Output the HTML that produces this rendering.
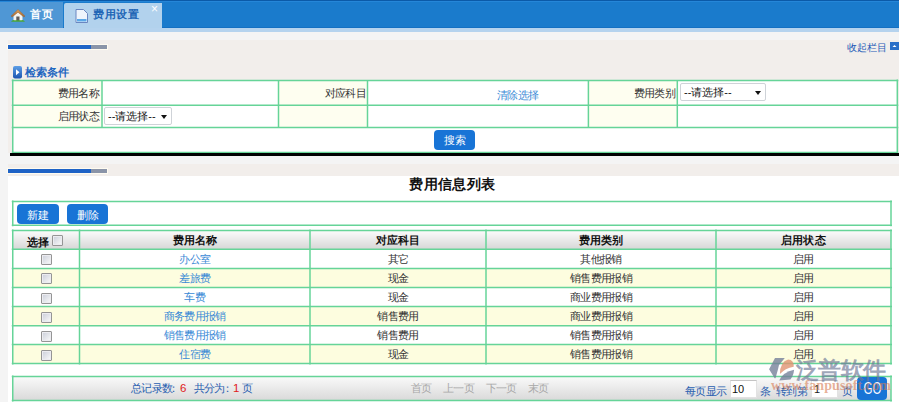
<!DOCTYPE html>
<html><head><meta charset="utf-8">
<style>
*{margin:0;padding:0;box-sizing:border-box}
html,body{width:899px;height:402px;overflow:hidden}
body{position:relative;background:#f4f4f4;font-family:"Liberation Sans",sans-serif;font-size:10px;color:#333}
.a{position:absolute}
.t{white-space:nowrap;line-height:12px;font-size:10.5px;letter-spacing:-0.7px}
.bar{width:99px;background:linear-gradient(90deg,#1f63c6 0,#1f63c6 84%,#8a94a8 84%,#8a94a8 100%);box-shadow:0 0 0 1px #fffbf0}
.sel{height:18px;border:1px solid #cfd3d8;border-radius:2px;background:#fff;font-size:11px;line-height:16px;padding-left:3px;color:#111;white-space:nowrap}
.sel:after{content:"";position:absolute;right:4px;top:7px;border-left:3px solid transparent;border-right:3px solid transparent;border-top:4px solid #111}
.btn{background:#1874d6;color:#fff;border-radius:4px;text-align:center;font-size:11px}
.lk{color:#3a8ad6}
.cb{width:11px;height:11px;border:1px solid #959595;border-radius:1px;box-shadow:inset 0 0 0 1px #ececf0;background:linear-gradient(135deg,#c9cdd8,#fbfbfb)}
</style></head><body>
<div class="a" style="left:0px;top:0px;width:899px;height:28px;background:#1a7bcc"></div>
<div class="a" style="left:0px;top:0px;width:899px;height:1px;background:#0b5aa8"></div>
<div class="a" style="left:0px;top:1px;width:899px;height:1px;background:#2586d8"></div>
<div class="a" style="left:0px;top:27px;width:899px;height:1px;background:#1470c2"></div>
<div class="a" style="left:0px;top:2px;width:63px;height:26px;background:#4f97d5"></div>
<div class="a" style="left:64px;top:3px;width:98px;height:29px;background:#b2d2ed;border-top-left-radius:2px"></div>
<div class="a" style="left:0px;top:28px;width:899px;height:4px;background:#b5d3ee"></div>
<svg class="a" style="left:10px;top:8px" width="16" height="15" viewBox="0 0 16 15">
<defs><linearGradient id="rf" x1="0" y1="0" x2="0" y2="1"><stop offset="0" stop-color="#e2a45c"/><stop offset="1" stop-color="#a8662a"/></linearGradient></defs>
<path d="M3.5 7.5 L8 3.8 L12.5 7.5 L12.5 13 L3.5 13 Z" fill="#f4f4f0"/>
<path d="M1 8.2 L8 1.5 L15 8.2 L13.6 8.8 L8 4.2 L2.4 8.8 Z" fill="url(#rf)" stroke="#9a6030" stroke-width="0.5"/>
<rect x="6.3" y="8.5" width="3.2" height="4.5" fill="#5f5a58"/>
<path d="M1 13.8 Q2.5 11.5 4.5 12.2 L11.5 12.2 Q13.5 11.5 15 13.8 Z" fill="#4aa63a"/>
</svg>
<div class="a t" style="left:30px;top:7px;font-size:11px;font-weight:bold;color:#fff;letter-spacing:0.5px;line-height:14px">首页</div>
<svg class="a" style="left:75px;top:9px" width="13" height="14" viewBox="0 0 13 14">
<path d="M1 0.5 L8.5 0.5 L12.5 4.5 L12.5 13.5 L1 13.5 Z" fill="#eef4fc" stroke="#6a86c0" stroke-width="1"/>
<rect x="2" y="10" width="9.5" height="2.5" fill="#5aa8e8"/>
</svg>
<div class="a t" style="left:93px;top:7px;font-size:11px;font-weight:bold;color:#2266b6;letter-spacing:0.7px;line-height:14px">费用设置</div>
<div class="a t" style="left:151px;top:3px;color:#fff;font-size:12px;line-height:12px">×</div>
<div class="a" style="left:8px;top:40px;width:891px;height:113px;background:#f2eeeb"></div>
<div class="a bar" style="left:8px;top:45px;height:3.5px"></div>
<div class="a t" style="left:846.5px;top:40.5px;color:#1f5cb8;line-height:13px;font-size:10px;letter-spacing:0.3px">收起栏目</div>
<svg class="a" style="left:890px;top:42px" width="9" height="8" viewBox="0 0 9 8"><rect x="0" y="0" width="9" height="8" fill="#2a6fc8"/><path d="M2.5 5 L4.5 3 L6.5 5 Z" fill="#fff"/></svg>
<svg class="a" style="left:13px;top:66px" width="9" height="12.5" viewBox="0 0 9 12.5"><defs><linearGradient id="ic" x1="0" y1="0" x2="0" y2="1"><stop offset="0" stop-color="#5d9ee6"/><stop offset="1" stop-color="#1c55b0"/></linearGradient></defs><rect x="0" y="0" width="9" height="12.5" rx="2" fill="url(#ic)"/><path d="M3 3.2 L6.5 6.2 L3 9.2 Z" fill="#fff"/></svg>
<div class="a t" style="left:25px;top:65px;font-size:11px;font-weight:bold;color:#1f66c0;line-height:14px;letter-spacing:0">检索条件</div>
<div class="a" style="left:12px;top:80px;width:886px;height:73px;background:#fff"></div>
<div class="a" style="left:12.75px;top:80.5px;width:89.25px;height:47.0px;background:#fefef0"></div>
<div class="a" style="left:278.5px;top:80.5px;width:89.0px;height:47.0px;background:#fefef0"></div>
<div class="a" style="left:588.4px;top:80.5px;width:88.89999999999998px;height:47.0px;background:#fefef0"></div>
<svg class="a" style="left:0;top:0" width="899" height="402" viewBox="0 0 899 402"><g stroke="#66d498" stroke-width="1.5" fill="none"><line x1="11.75" y1="80.50" x2="898.30" y2="80.50"/><line x1="11.75" y1="105.20" x2="898.30" y2="105.20"/><line x1="11.75" y1="127.50" x2="898.30" y2="127.50"/><line x1="102.00" y1="80.50" x2="102.00" y2="127.50"/><line x1="278.50" y1="80.50" x2="278.50" y2="127.50"/><line x1="367.50" y1="80.50" x2="367.50" y2="127.50"/><line x1="588.40" y1="80.50" x2="588.40" y2="127.50"/><line x1="677.30" y1="80.50" x2="677.30" y2="127.50"/><line x1="12.75" y1="79.50" x2="12.75" y2="152.50"/><line x1="897.30" y1="79.50" x2="897.30" y2="152.50"/><line x1="11.75" y1="152.50" x2="898.30" y2="152.50"/></g></svg>
<div class="a t" style="right:800px;top:87px;">费用名称</div>
<div class="a t" style="right:533px;top:87px;">对应科目</div>
<div class="a t" style="right:224px;top:87px;">费用类别</div>
<div class="a t" style="right:800px;top:110px;">启用状态</div>
<div class="a t lk" style="left:497px;top:89px;">清除选择</div>
<div class="a sel" style="left:104px;top:107px;width:68px">--请选择--</div>
<div class="a sel" style="left:680px;top:83px;width:86px">--请选择--</div>
<div class="a btn" style="left:434px;top:129.5px;width:41px;height:20px;line-height:20px">搜索</div>
<div class="a" style="left:10px;top:153px;width:889px;height:3px;background:#000"></div>
<div class="a" style="left:8px;top:164px;width:891px;height:12px;background:#f2eeeb"></div>
<div class="a bar" style="left:8px;top:169px;height:3.5px"></div>
<div class="a" style="left:8px;top:176px;width:891px;height:226px;background:#fff"></div>
<div class="a t" style="left:302.5px;top:175px;width:300px;text-align:center;font-size:14px;font-weight:bold;color:#111;line-height:18px;letter-spacing:0.4px">费用信息列表</div>
<svg class="a" style="left:0;top:0" width="899" height="402" viewBox="0 0 899 402"><g stroke="#66d498" stroke-width="1.5" fill="none"><line x1="11.75" y1="201.50" x2="892.00" y2="201.50"/><line x1="11.75" y1="225.30" x2="892.00" y2="225.30"/><line x1="12.75" y1="200.50" x2="12.75" y2="226.30"/><line x1="891.00" y1="200.50" x2="891.00" y2="226.30"/></g></svg>
<div class="a btn" style="left:17px;top:204px;width:42px;height:19.5px;line-height:23px;font-size:11px">新建</div>
<div class="a btn" style="left:67px;top:204px;width:41px;height:19.5px;line-height:23px;font-size:11px">删除</div>
<div class="a" style="left:12px;top:230px;width:879px;height:19.5px;background:linear-gradient(#fdfdfd,#d5d5d5)"></div>
<div class="a" style="left:12px;top:249.3px;width:879px;height:19.099999999999966px;background:#fff"></div>
<div class="a" style="left:12px;top:268.4px;width:879px;height:19.100000000000023px;background:#fdfddf"></div>
<div class="a" style="left:12px;top:287.5px;width:879px;height:19.100000000000023px;background:#fff"></div>
<div class="a" style="left:12px;top:306.6px;width:879px;height:19.099999999999966px;background:#fdfddf"></div>
<div class="a" style="left:12px;top:325.7px;width:879px;height:18.900000000000034px;background:#fff"></div>
<div class="a" style="left:12px;top:344.6px;width:879px;height:18.899999999999977px;background:#fdfddf"></div>
<svg class="a" style="left:0;top:0" width="899" height="402" viewBox="0 0 899 402"><g stroke="#66d498" stroke-width="1.5" fill="none"><line x1="11.75" y1="230.50" x2="892.00" y2="230.50"/><line x1="11.75" y1="249.30" x2="892.00" y2="249.30"/><line x1="11.75" y1="268.40" x2="892.00" y2="268.40"/><line x1="11.75" y1="287.50" x2="892.00" y2="287.50"/><line x1="11.75" y1="306.60" x2="892.00" y2="306.60"/><line x1="11.75" y1="325.70" x2="892.00" y2="325.70"/><line x1="11.75" y1="344.60" x2="892.00" y2="344.60"/><line x1="11.75" y1="363.50" x2="892.00" y2="363.50"/><line x1="12.75" y1="229.50" x2="12.75" y2="364.50"/><line x1="79.50" y1="229.50" x2="79.50" y2="364.50"/><line x1="310.00" y1="229.50" x2="310.00" y2="364.50"/><line x1="486.00" y1="229.50" x2="486.00" y2="364.50"/><line x1="716.00" y1="229.50" x2="716.00" y2="364.50"/><line x1="891.00" y1="229.50" x2="891.00" y2="364.50"/></g></svg>
<div class="a t" style="left:27px;top:235.5px;font-size:11px;font-weight:bold;color:#111;letter-spacing:0">选择</div>
<div class="a cb" style="left:52px;top:235px;width:10.5px;height:10.5px"></div>
<div class="a t" style="left:44.75px;top:234px;width:300px;text-align:center;font-size:11px;font-weight:bold;color:#111;letter-spacing:0.1px">费用名称</div>
<div class="a t" style="left:248.0px;top:234px;width:300px;text-align:center;font-size:11px;font-weight:bold;color:#111;letter-spacing:0.1px">对应科目</div>
<div class="a t" style="left:451.0px;top:234px;width:300px;text-align:center;font-size:11px;font-weight:bold;color:#111;letter-spacing:0.1px">费用类别</div>
<div class="a t" style="left:653.5px;top:234px;width:300px;text-align:center;font-size:11px;font-weight:bold;color:#111;letter-spacing:0.1px">启用状态</div>
<div class="a cb" style="left:41px;top:254.3px"></div>
<div class="a t" style="left:44.75px;top:252.5px;width:300px;text-align:center;color:#3a8ad6">办公室</div>
<div class="a t" style="left:248.0px;top:252.5px;width:300px;text-align:center;color:#333">其它</div>
<div class="a t" style="left:451.0px;top:252.5px;width:300px;text-align:center;color:#333">其他报销</div>
<div class="a t" style="left:653.5px;top:252.5px;width:300px;text-align:center;color:#333">启用</div>
<div class="a cb" style="left:41px;top:273.4px"></div>
<div class="a t" style="left:44.75px;top:271.59999999999997px;width:300px;text-align:center;color:#3a8ad6">差旅费</div>
<div class="a t" style="left:248.0px;top:271.59999999999997px;width:300px;text-align:center;color:#333">现金</div>
<div class="a t" style="left:451.0px;top:271.59999999999997px;width:300px;text-align:center;color:#333">销售费用报销</div>
<div class="a t" style="left:653.5px;top:271.59999999999997px;width:300px;text-align:center;color:#333">启用</div>
<div class="a cb" style="left:41px;top:292.5px"></div>
<div class="a t" style="left:44.75px;top:290.7px;width:300px;text-align:center;color:#3a8ad6">车费</div>
<div class="a t" style="left:248.0px;top:290.7px;width:300px;text-align:center;color:#333">现金</div>
<div class="a t" style="left:451.0px;top:290.7px;width:300px;text-align:center;color:#333">商业费用报销</div>
<div class="a t" style="left:653.5px;top:290.7px;width:300px;text-align:center;color:#333">启用</div>
<div class="a cb" style="left:41px;top:311.6px"></div>
<div class="a t" style="left:44.75px;top:309.8px;width:300px;text-align:center;color:#3a8ad6">商务费用报销</div>
<div class="a t" style="left:248.0px;top:309.8px;width:300px;text-align:center;color:#333">销售费用</div>
<div class="a t" style="left:451.0px;top:309.8px;width:300px;text-align:center;color:#333">商业费用报销</div>
<div class="a t" style="left:653.5px;top:309.8px;width:300px;text-align:center;color:#333">启用</div>
<div class="a cb" style="left:41px;top:330.7px"></div>
<div class="a t" style="left:44.75px;top:328.9px;width:300px;text-align:center;color:#3a8ad6">销售费用报销</div>
<div class="a t" style="left:248.0px;top:328.9px;width:300px;text-align:center;color:#333">销售费用</div>
<div class="a t" style="left:451.0px;top:328.9px;width:300px;text-align:center;color:#333">销售费用报销</div>
<div class="a t" style="left:653.5px;top:328.9px;width:300px;text-align:center;color:#333">启用</div>
<div class="a cb" style="left:41px;top:349.6px"></div>
<div class="a t" style="left:44.75px;top:347.8px;width:300px;text-align:center;color:#3a8ad6">住宿费</div>
<div class="a t" style="left:248.0px;top:347.8px;width:300px;text-align:center;color:#333">现金</div>
<div class="a t" style="left:451.0px;top:347.8px;width:300px;text-align:center;color:#333">销售费用报销</div>
<div class="a t" style="left:653.5px;top:347.8px;width:300px;text-align:center;color:#333">启用</div>
<div class="a" style="left:12px;top:376px;width:879px;height:24.5px;background:linear-gradient(#fbfbfb,#d8d8d8)"></div>
<svg class="a" style="left:0;top:0" width="899" height="402" viewBox="0 0 899 402"><g stroke="#66d498" stroke-width="1.5" fill="none"><line x1="11.75" y1="376.50" x2="892.00" y2="376.50"/><line x1="11.75" y1="400.40" x2="892.00" y2="400.40"/><line x1="12.75" y1="375.50" x2="12.75" y2="401.40"/><line x1="891.00" y1="375.50" x2="891.00" y2="401.40"/></g></svg>
<div class="a t" style="left:131px;top:381px;color:#2a5fb0;line-height:14px">总记录数</div>
<div class="a t" style="left:167.5px;top:381px;color:#2a5fb0;line-height:14px">：</div>
<div class="a t" style="left:180px;top:380.5px;color:#e02020;font-size:11.5px;line-height:14px;letter-spacing:0">6</div>
<div class="a t" style="left:193.5px;top:381px;color:#2a5fb0;line-height:14px">共分为</div>
<div class="a t" style="left:222px;top:381px;color:#2a5fb0;line-height:14px">：</div>
<div class="a t" style="left:233px;top:380.5px;color:#e02020;font-size:11.5px;line-height:14px;letter-spacing:0">1</div>
<div class="a t" style="left:241.5px;top:381px;color:#2a5fb0;line-height:14px">页</div>
<div class="a t" style="left:411px;top:381px;color:#a8a8a8;line-height:14px">首页</div>
<div class="a t" style="left:443px;top:381px;color:#a8a8a8;line-height:14px">上一页</div>
<div class="a t" style="left:485.5px;top:381px;color:#a8a8a8;line-height:14px">下一页</div>
<div class="a t" style="left:527.5px;top:381px;color:#a8a8a8;line-height:14px">末页</div>
<div class="a t" style="left:685px;top:384px;color:#2a5fb0;line-height:14px">每页显示</div>
<div class="a" style="left:730px;top:379.5px;width:27px;height:18px;background:#fff;border:1px solid #e2e2e2;border-top-color:#c4c4c4;font-size:11px;line-height:16px;padding-left:1px;color:#111">10</div>
<div class="a t" style="left:760px;top:384px;color:#2a5fb0;line-height:14px">条</div>
<div class="a t" style="left:776px;top:384px;color:#2a5fb0;line-height:14px">转到第</div>
<div class="a" style="left:811px;top:379.5px;width:27px;height:18px;background:#fff;border:1px solid #e2e2e2;border-top-color:#c4c4c4;font-size:11px;line-height:16px;padding-left:2px;color:#222">1</div>
<div class="a t" style="left:842px;top:384px;color:#2a5fb0;line-height:14px">页</div>
<div class="a btn" style="left:857px;top:377px;width:30px;height:23px;line-height:23px;font-size:16px;color:#f4f8ff"><span style="display:inline-block;transform:scaleX(0.72)">GO</span></div>
<svg class="a" style="left:768px;top:357px;opacity:0.8" width="28" height="25" viewBox="0 0 28 25">
<path d="M7 1.1 L16.8 1.1 L11 8 L10 12.3 L7.5 21.3 L6.7 21.3 L1.1 12.3 Z" fill="#76819b"/>
<path d="M11.9 17.1 Q12 5 20.1 2.6 Q26 3 25.7 9.7 Q17 11 11.9 17.1 Z" fill="#e19472"/>
<path d="M11.2 23.5 Q15 15.2 26.1 12.8 Q25.5 19 22.4 22.4 Z" fill="#76819b"/>
</svg>
<div class="a t" style="left:796px;top:357px;font-size:23px;line-height:26px;font-weight:bold;color:rgba(110,120,150,0.68)">泛普软件</div>
<div class="a t" style="left:771px;top:379px;font-family:'Liberation Serif',serif;font-size:14px;line-height:14px;font-weight:bold;color:rgba(215,125,85,0.6);letter-spacing:0.1px">www.fanpusoft.com</div>
</body></html>
